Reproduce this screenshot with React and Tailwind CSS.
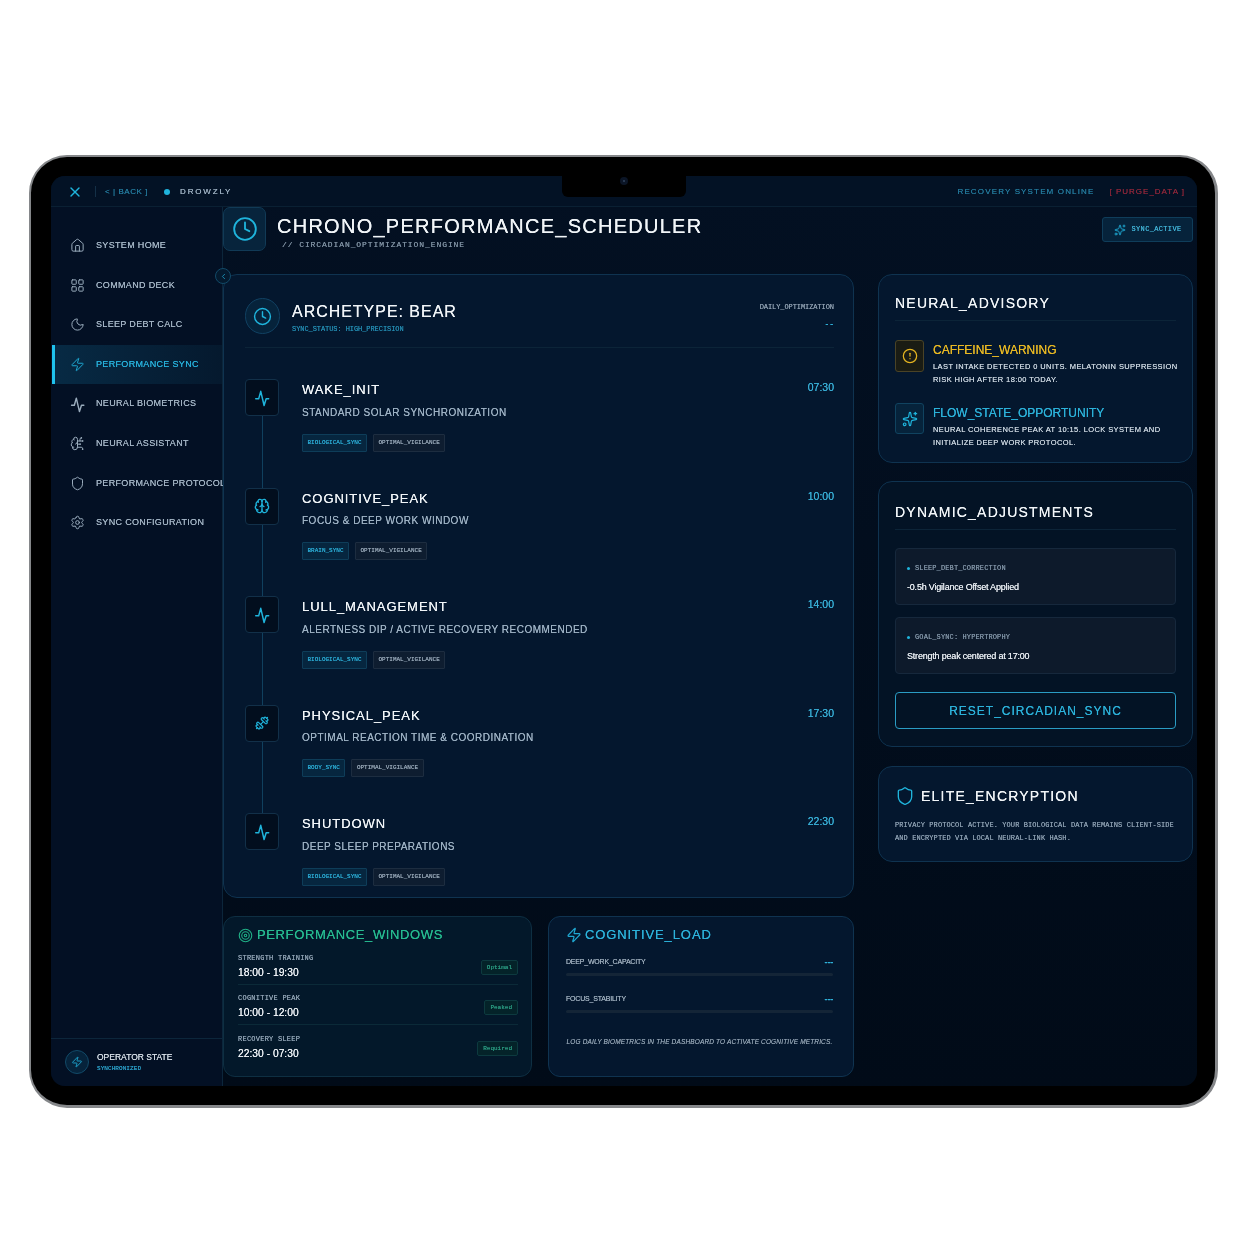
import React from "react";
import { X, House, LayoutGrid, Moon, Zap, BrainCircuit, Shield, Settings, Clock, Sparkles, CircleAlert, Brain, Dumbbell, Target, ChevronLeft } from "lucide-react";

const sans = "font-['Liberation_Sans',Arial,sans-serif]";
const mono = "font-['Liberation_Mono','DejaVu_Sans_Mono',monospace]";

function Pulse({ size = 20, strokeWidth = 1.8, className = "" }) {
  return (
    <svg width={size} height={size} viewBox="0 0 24 24" fill="none" stroke="currentColor" strokeWidth={strokeWidth} strokeLinecap="round" strokeLinejoin="round" className={className}>
      <polyline points="4.5 13 8 13 10.5 4 14.5 21 17 13 20 13" />
    </svg>
  );
}

const nav = [
  ["SYSTEM HOME", House],
  ["COMMAND DECK", LayoutGrid],
  ["SLEEP DEBT CALC", Moon],
  ["PERFORMANCE SYNC", Zap, true],
  ["NEURAL BIOMETRICS", Pulse],
  ["NEURAL ASSISTANT", BrainCircuit],
  ["PERFORMANCE PROTOCOL", Shield],
  ["SYNC CONFIGURATION", Settings],
];

const rows = [
  ["WAKE_INIT", "STANDARD SOLAR SYNCHRONIZATION", "07:30", Pulse, "BIOLOGICAL_SYNC"],
  ["COGNITIVE_PEAK", "FOCUS & DEEP WORK WINDOW", "10:00", Brain, "BRAIN_SYNC"],
  ["LULL_MANAGEMENT", "ALERTNESS DIP / ACTIVE RECOVERY RECOMMENDED", "14:00", Pulse, "BIOLOGICAL_SYNC"],
  ["PHYSICAL_PEAK", "OPTIMAL REACTION TIME & COORDINATION", "17:30", Dumbbell, "BODY_SYNC"],
  ["SHUTDOWN", "DEEP SLEEP PREPARATIONS", "22:30", Pulse, "BIOLOGICAL_SYNC"],
];

const windows = [
  ["STRENGTH TRAINING", "18:00 - 19:30", "Optimal"],
  ["COGNITIVE PEAK", "10:00 - 12:00", "Peaked"],
  ["RECOVERY SLEEP", "22:30 - 07:30", "Required"],
];

const card = "rounded-[14px] border border-[#0f3350] bg-[#04172e]";

function Row({ title, desc, time, Icon, tag, last }) {
  return (
    <div className={`flex ${last ? "h-[104px]" : "h-[108.5px]"}`}>
      <div className="flex w-[34px] shrink-0 flex-col items-center">
        <div className="flex h-[37px] w-[34px] shrink-0 items-center justify-center rounded-[4px] border border-[#123049] bg-[#020e1e]">
          <Icon size={Icon === Dumbbell ? 14 : Icon === Brain ? 16 : 20} strokeWidth={Icon === Pulse ? 1.8 : 2} className="text-[#1fb4dc]" />
        </div>
        {!last && <div className="w-px flex-1 bg-[#10405e]" />}
      </div>
      <div className="ml-[23px] min-w-0 flex-1">
        <div className="flex items-start justify-between">
          <div className="mt-[2px] text-[13px] leading-[18px] tracking-[0.95px] text-[#f1f5f8]">{title}</div>
          <div className="mt-[2px] text-[10.5px] leading-[13px] text-[#38aed5]">{time}</div>
        </div>
        <div className="mt-[6.5px] text-[10px] leading-[14px] tracking-[0.5px] text-[#9db1c3]">{desc}</div>
        <div className="mt-[14px] flex gap-[6px]">
          <span className={`${mono} rounded-[1px] border border-[#0e3d59] bg-[#06263f] px-[4.5px] text-[6px] leading-[16px] text-[#2aa8d0]`}>{tag}</span>
          <span className={`${mono} rounded-[1px] border border-[#1d2d40] bg-[#0e1d30] px-[4.5px] text-[6px] leading-[16px] text-[#93a3b3]`}>OPTIMAL_VIGILANCE</span>
        </div>
      </div>
    </div>
  );
}

function Adjust({ label, value }) {
  return (
    <div className="h-[57px] rounded-[4px] border border-[#16283c] bg-[#0d1a2b] px-[11px] pt-[13px]">
      <div className="flex items-center">
        <span className="h-[3px] w-[3px] rounded-full bg-[#1fb4dc]" />
        <span className={`${mono} ml-[5px] text-[7px] leading-[12px] tracking-[0.12px] text-[#7f92a4]`}>{label}</span>
      </div>
      <div className="mt-[7px] text-[9px] leading-[12px] tracking-[-0.2px] text-[#e6ebf0]">{value}</div>
    </div>
  );
}

export default function App() {
  return (
    <div className={`${sans} h-[1248px] w-[1248px] overflow-hidden bg-white pl-[29px] pt-[155px] [text-shadow:0_0_0.4px_currentColor]`}>
      <div className="relative h-[953px] w-[1189px] rounded-[38px] border-t-[2px] border-r-[3px] border-b-[3px] border-l-[2px] border-[#85878a] bg-black pb-[19px] pl-[20px] pr-[18px] pt-[19px] blur-[0.35px]">
        <div className="absolute left-[531px] top-[19px] z-10 flex h-[21px] w-[124px] justify-center rounded-b-[6px] bg-black pt-[1px]">
          <div className="flex h-[8px] w-[8px] items-center justify-center rounded-full bg-[#0b1526]"><div className="h-[2px] w-[2px] rounded-full bg-[#33455e]" /></div>
        </div>

        <div className="relative flex h-full flex-col overflow-hidden rounded-[14px] bg-gradient-to-b from-[#031022] to-[#010b18]">
          <header className="flex h-[31px] shrink-0 items-center border-b border-[#0a2033] bg-[#031225] pl-[16px] pr-[12px] pt-[1px]">
            <X size={16} strokeWidth={2} className="shrink-0 text-[#1fb4dc]" />
            <div className="ml-[12px] h-[11px] w-px bg-[#143047]" />
            <span className="ml-[9px] text-[8px] tracking-[0.56px] text-[#23789a]">&lt; | BACK ]</span>
            <span className="ml-[16px] h-[6px] w-[6px] rounded-full bg-[#1fb4dc]" />
            <span className="ml-[10px] text-[8px] tracking-[1.83px] text-[#9db0c1]">DROWZLY</span>
            <span className="ml-auto text-[8px] tracking-[1.15px] text-[#23789a]">RECOVERY SYSTEM ONLINE</span>
            <span className="ml-[15px] text-[8px] tracking-[1px] text-[#8a2639]">[ PURGE_DATA ]</span>
          </header>

          <div className="relative flex min-h-0 flex-1">
            <aside className="flex w-[172px] shrink-0 flex-col border-r border-[#0c263b] bg-[#031024] pl-[1px] pt-[19px]">
              {nav.map(([label, Icon, active]) => (
                <div key={label} className={`flex h-[39.6px] shrink-0 items-center border-l-[3px] pl-[15px] ${active ? "border-[#1fc2ee] bg-gradient-to-r from-[#072a44] to-[#05192e]" : "border-transparent"}`}>
                  <Icon size={Icon === Pulse ? 19 : 15} strokeWidth={Icon === Pulse ? 1.8 : 1.6} className={`shrink-0 ${Icon === Pulse ? "-mx-[2px]" : ""} ${active ? "text-[#1fa8d2]" : "text-[#9aacbd]"}`} />
                  <span className={`ml-[11px] whitespace-nowrap text-[9px] tracking-[0.33px] ${active ? "text-[#27b0da]" : "text-[#a3b4c4]"}`}>{label}</span>
                </div>
              ))}
              <div className="-ml-[1px] mt-auto flex h-[48px] items-center border-t border-[#0c263b] pb-[1px] pl-[14px]">
                <div className="flex h-[24px] w-[24px] items-center justify-center rounded-full border border-[#124a68] bg-[#06233b]">
                  <Zap size={12} strokeWidth={1.8} className="text-[#1fa8d2]" />
                </div>
                <div className="ml-[8px]">
                  <div className="text-[8.5px] leading-[11px] text-[#d5dde5]">OPERATOR STATE</div>
                  <div className={`${mono} mt-[1px] text-[6px] leading-[9px] tracking-[0.07px] text-[#2a9cc4]`}>SYNCHRONIZED</div>
                </div>
              </div>
            </aside>

            <div className="absolute left-[164px] top-[61px] z-10 flex h-[16px] w-[16px] items-center justify-center rounded-full border border-[#124a68] bg-[#041a2e]">
              <ChevronLeft size={9} strokeWidth={2} className="text-[#1fa8d2]" />
            </div>

            <main className="flex min-w-0 flex-1 flex-col pr-[4px]">
              <div className="flex h-[67px] shrink-0 items-start">
                <div className="flex h-[44px] w-[43px] shrink-0 items-center justify-center rounded-[7px] border border-[#113a56] bg-[#07243c]">
                  <Clock size={26} strokeWidth={1.7} className="text-[#1fb4dc]" />
                </div>
                <div className="ml-[11px] mt-[7px]">
                  <div className="whitespace-nowrap text-[20px] leading-[25px] tracking-[1.26px] text-[#f1f5f8]">CHRONO_PERFORMANCE_SCHEDULER</div>
                  <div className={`${mono} ml-[5px] mt-[1px] text-[8px] leading-[10px] tracking-[0.92px] text-[#7d8fa0]`}>// CIRCADIAN_OPTIMIZATION_ENGINE</div>
                </div>
                <div className="ml-auto mt-[10px] flex h-[25px] w-[91px] items-center justify-center rounded-[3px] border border-[#0f3d5a] bg-[#06233b]">
                  <Sparkles size={12} strokeWidth={1.9} className="text-[#1fa8d2]" />
                  <span className={`${mono} ml-[6px] text-[7px] tracking-[0.34px] text-[#40b0d3]`}>SYNC_ACTIVE</span>
                </div>
              </div>

              <div className="flex min-h-0 flex-1 gap-[24px]">
                <div className="flex w-[631px] shrink-0 flex-col gap-[18px]">
                  <section className={`${card} h-[624px] pl-[21px] pr-[19px] pt-[23px]`}>
                    <div className="flex h-[50px] items-start justify-between border-b border-[#0c2438]">
                      <div className="flex">
                        <div className="flex h-[36px] w-[35px] items-center justify-center rounded-full border border-[#124263] bg-[#06233b]">
                          <Clock size={19} strokeWidth={1.8} className="text-[#1fb4dc]" />
                        </div>
                        <div className="ml-[12px]">
                          <div className="mt-[4px] text-[16px] leading-[20px] tracking-[0.97px] text-[#f1f5f8]">ARCHETYPE: BEAR</div>
                          <div className={`${mono} mt-[3px] text-[7px] leading-[9px] tracking-[-0.01em] text-[#2389ae]`}>SYNC_STATUS: HIGH_PRECISION</div>
                        </div>
                      </div>
                      <div className="text-right">
                        <div className={`${mono} mt-[5px] text-[7px] leading-[9px] tracking-[-0.01em] text-[#8c9dae]`}>DAILY_OPTIMIZATION</div>
                        <div className={`${mono} mt-[6px] text-[8px] font-bold leading-[12px] text-[#2fb0d8]`}>--</div>
                      </div>
                    </div>
                    <div className="mt-[31px]">
                      {rows.map((r, i) => (
                        <Row key={i} title={r[0]} desc={r[1]} time={r[2]} Icon={r[3]} tag={r[4]} last={i === rows.length - 1} />
                      ))}
                    </div>
                  </section>

                  <div className="flex h-[161px] gap-[16px]">
                    <section className="w-[309px] rounded-[12px] border border-[#0e2f42] bg-[#03182a] pl-[14px] pr-[13px] pt-[10px]">
                      <div className="flex h-[16px] items-center">
                        <Target size={15} strokeWidth={1.8} className="text-[#1fae85]" />
                        <span className="ml-[4px] text-[13px] tracking-[0.63px] text-[#26bb90]">PERFORMANCE_WINDOWS</span>
                      </div>
                      <div className="mt-[2px]">
                        {windows.map((w, i) => (
                          <div key={w[0]} className={`flex h-[40px] items-center justify-between pt-[2px] ${i < 2 ? "border-b border-[#0b2a38]" : ""}`}>
                            <div>
                              <div className={`${mono} text-[7px] leading-[12px] tracking-[0.24px] text-[#8fa2b3]`}>{w[0]}</div>
                              <div className="mt-[2px] text-[10.3px] leading-[13px] text-[#eef2f6]">{w[1]}</div>
                            </div>
                            <span className={`${mono} mt-[4px] rounded-[2px] border border-[#0d3a3f] bg-[#042329] px-[5px] text-[6px] leading-[13px] text-[#2a9a80]`}>{w[2]}</span>
                          </div>
                        ))}
                      </div>
                    </section>
                    <section className="w-[306px] rounded-[12px] border border-[#0f3350] bg-[#04172e] pl-[17px] pr-[20px] pt-[10px]">
                      <div className="flex h-[16px] items-center">
                        <Zap size={16} strokeWidth={1.7} className="text-[#1fa8d2]" />
                        <span className="ml-[3px] text-[13px] tracking-[0.9px] text-[#2cb2da]">COGNITIVE_LOAD</span>
                      </div>
                      <div className="mt-[13px]">
                        <div className="flex items-center justify-between">
                          <span className="text-[7px] leading-[12px] tracking-[-0.2px] text-[#9cacbb]">DEEP_WORK_CAPACITY</span>
                          <span className="text-[9px] font-bold leading-[12px] tracking-[-0.2px] text-[#2fb0d8]">---</span>
                        </div>
                        <div className="mt-[5px] h-[3px] rounded-full bg-[#142537]" />
                      </div>
                      <div className="mt-[17px]">
                        <div className="flex items-center justify-between">
                          <span className="text-[7px] leading-[12px] tracking-[-0.2px] text-[#9cacbb]">FOCUS_STABILITY</span>
                          <span className="text-[9px] font-bold leading-[12px] tracking-[-0.2px] text-[#2fb0d8]">---</span>
                        </div>
                        <div className="mt-[5px] h-[3px] rounded-full bg-[#142537]" />
                      </div>
                      <div className="mt-[24px] text-center text-[6.5px] italic leading-[10px] tracking-[0.15px] text-[#8c9dad]">LOG DAILY BIOMETRICS IN THE DASHBOARD TO ACTIVATE COGNITIVE METRICS.</div>
                    </section>
                  </div>
                </div>

                <div className="flex w-[315px] shrink-0 flex-col">
                  <section className={`${card} h-[189px] px-[16px] pt-[18px]`}>
                    <div className="h-[28px] border-b border-[#0c2438] text-[14px] leading-[20px] tracking-[1.22px] text-[#f1f5f8]">NEURAL_ADVISORY</div>
                    <div className="mt-[19px] flex">
                      <div className="flex h-[32px] w-[29px] shrink-0 items-center justify-center rounded-[3px] border border-[#4a4326] bg-[#1a1c14]">
                        <CircleAlert size={16} strokeWidth={1.9} className="text-[#e3b320]" />
                      </div>
                      <div className="ml-[9px] mt-[3px]">
                        <div className="text-[12px] leading-[15px] text-[#e8b823]">CAFFEINE_WARNING</div>
                        <div className="mt-[2px] w-[250px] text-[7.5px] leading-[13px] tracking-[0.4px] text-[#c8d3dd]">LAST INTAKE DETECTED 0 UNITS. MELATONIN SUPPRESSION RISK HIGH AFTER 18:00 TODAY.</div>
                      </div>
                    </div>
                    <div className="mt-[17px] flex">
                      <div className="flex h-[31px] w-[29px] shrink-0 items-center justify-center rounded-[3px] border border-[#104360] bg-[#06233b]">
                        <Sparkles size={16} strokeWidth={1.8} className="text-[#1fb4dc]" />
                      </div>
                      <div className="ml-[9px] mt-[3px]">
                        <div className="text-[12px] leading-[15px] text-[#2cb2da]">FLOW_STATE_OPPORTUNITY</div>
                        <div className="mt-[2px] w-[250px] text-[7.5px] leading-[13px] tracking-[0.4px] text-[#c8d3dd]">NEURAL COHERENCE PEAK AT 10:15. LOCK SYSTEM AND INITIALIZE DEEP WORK PROTOCOL.</div>
                      </div>
                    </div>
                  </section>

                  <section className={`${card} mt-[18px] h-[266px] bg-[#031325] px-[16px] pt-[20px]`}>
                    <div className="h-[28px] border-b border-[#0c2438] text-[14px] leading-[20px] tracking-[1.22px] text-[#f1f5f8]">DYNAMIC_ADJUSTMENTS</div>
                    <div className="mt-[18px] flex flex-col gap-[12px]">
                      <Adjust label="SLEEP_DEBT_CORRECTION" value="-0.5h Vigilance Offset Applied" />
                      <Adjust label="GOAL_SYNC: HYPERTROPHY" value="Strength peak centered at 17:00" />
                    </div>
                    <div className="mt-[18px] flex h-[37px] items-center justify-center rounded-[4px] border border-[#2a9cc4] text-[12px] tracking-[1px] text-[#2cb2da]">RESET_CIRCADIAN_SYNC</div>
                  </section>

                  <section className={`${card} mt-[19px] h-[96px] px-[16px] pt-[19px]`}>
                    <div className="flex items-center">
                      <Shield size={20} strokeWidth={1.6} className="text-[#1fb4dc]" />
                      <span className="ml-[6px] text-[14px] leading-[20px] tracking-[1.22px] text-[#f1f5f8]">ELITE_ENCRYPTION</span>
                    </div>
                    <div className={`${mono} mt-[13px] text-[7px] leading-[13px] tracking-[0.09px] text-[#8a9daf]`}>PRIVACY PROTOCOL ACTIVE. YOUR BIOLOGICAL DATA REMAINS CLIENT-SIDE AND ENCRYPTED VIA LOCAL NEURAL-LINK HASH.</div>
                  </section>
                </div>
              </div>
            </main>
          </div>
        </div>
      </div>
    </div>
  );
}
